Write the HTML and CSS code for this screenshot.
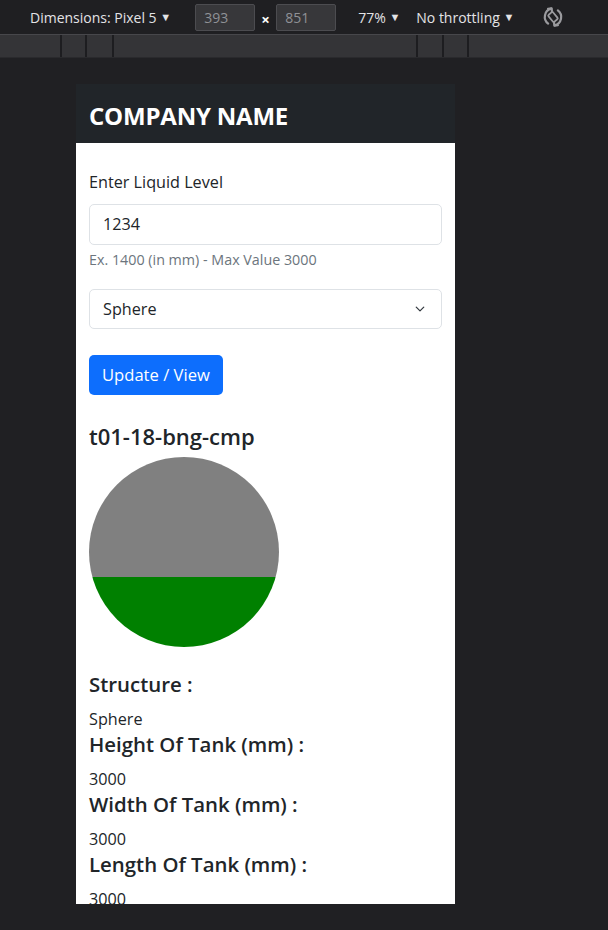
FILE: index.html
```html
<!DOCTYPE html>
<html lang="en">
<head>
<meta charset="utf-8">
<title>Tank Level</title>
<link rel="stylesheet" href="styles.css">
</head>
<body>
<div class="toolbar">
  <span class="tb-item tb-dim">Dimensions: Pixel 5 <span class="caret">▼</span></span>
  <span class="tb-box">393</span>
  <span class="tb-x">×</span>
  <span class="tb-box">851</span>
  <span class="tb-item tb-zoom">77% <span class="caret">▼</span></span>
  <span class="tb-item tb-throttle">No throttling <span class="caret">▼</span></span>
  <span class="tb-rotate">
    <svg width="26" height="26" viewBox="0 0 26 26" fill="none" stroke="#9a9a9e" stroke-width="2.2" stroke-linecap="round">
      <g transform="rotate(-40 13 13)">
        <path d="M5 15 A8.5 8.5 0 0 1 17 5.5"/>
        <path d="M21 11 A8.5 8.5 0 0 1 9 20.5"/>
        <path d="M14.5 3.5 L17.5 5.5 L15.5 8.5" stroke-linejoin="round"/>
        <path d="M11.5 22.5 L8.5 20.5 L10.5 17.5" stroke-linejoin="round"/>
        <rect x="10" y="8.5" width="6" height="9" rx="1.2" stroke-width="1.8"/>
      </g>
    </svg>
  </span>
</div>
<div class="ruler">
  <div class="seg seg1"></div>
  <div class="seg seg2"></div>
  <div class="seg seg3"></div>
  <div class="seg seg4"></div>
  <div class="seg seg5"></div>
  <div class="seg seg6"></div>
  <div class="seg-rest"></div>
</div>
<div class="stage">
  <div class="device">
    <header class="app-header">
      <h1 class="brand">COMPANY NAME</h1>
    </header>
    <main class="content">
      <label class="form-label" for="level">Enter Liquid Level</label>
      <div class="form-control">1234</div>
      <div class="form-text">Ex. 1400 (in mm) - Max Value 3000</div>
      <div class="form-select">
        <span>Sphere</span>
        <svg width="14" height="10" viewBox="0 0 16 16" fill="none" stroke="#343a40" stroke-width="2" stroke-linecap="round" stroke-linejoin="round"><path d="M2 5l6 6 6-6"/></svg>
      </div>
      <div class="btn">Update / View</div>
      <h3 class="tank-name">t01-18-bng-cmp</h3>
      <div class="tank"></div>
      <h5 class="prop-title first">Structure :</h5>
      <p class="prop-value">Sphere</p>
      <h5 class="prop-title">Height Of Tank (mm) :</h5>
      <p class="prop-value">3000</p>
      <h5 class="prop-title">Width Of Tank (mm) :</h5>
      <p class="prop-value">3000</p>
      <h5 class="prop-title">Length Of Tank (mm) :</h5>
      <p class="prop-value">3000</p>
    </main>
  </div>
</div>
</body>
</html>
```
FILE: styles.css
```css
* { box-sizing: border-box; }
html, body { margin: 0; padding: 0; }
body {
  background: #202023;
  width: 608px;
  height: 930px;
  overflow: hidden;
  font-family: "Open Sans", "Noto Sans", sans-serif;
}
.toolbar {
  height: 35px;
  background: #1f1f22;
  border-bottom: 1px solid #47474b;
  display: flex;
  align-items: center;
  color: #e3e3e6;
  font-size: 14px;
  padding-left: 30px;
}
.caret { font-size: 11px; position: relative; top: -2px; }
.tb-dim { margin-right: 24px; }
.tb-box {
  width: 60px;
  height: 27px;
  background: #37373a;
  border: 1px solid #4c4c50;
  border-radius: 2px;
  color: #8f9196;
  padding-left: 8px;
  line-height: 25px;
}
.tb-x { width: 21px; text-align: center; font-weight: bold; color: #fff; font-size: 15px; padding-top: 4px; }
.tb-zoom { margin-left: 22px; margin-right: 16px; }
.tb-rotate { margin-left: 26px; display: flex; }
.ruler {
  height: 23px;
  background: #343437;
  display: flex;
  border-bottom: 1px solid #2a2a2d;
}
.seg { border-right: 2px solid #1d1d20; height: 100%; }
.seg1 { width: 62px; }
.seg2 { width: 25px; }
.seg3 { width: 27px; }
.seg4 { width: 304px; }
.seg5 { width: 26px; }
.seg6 { width: 25px; }
.seg-rest { flex: 1; }
.stage { padding: 26px 0 0 76px; }
.device {
  width: 379px;
  height: 820px;
  overflow: hidden;
  background: #fff;
  font-family: "Open Sans", "Noto Sans", sans-serif;
  color: #212529;
}
.app-header {
  height: 59px;
  background: #212529;
  display: flex;
  align-items: center;
  padding: 0 13px;
}
.brand {
  margin: 0;
  color: #fff;
  font-size: 24px;
  font-weight: 700;
  letter-spacing: -0.2px;
  position: relative;
  top: 2px;
}
.content {
  padding: 28px 13px 0;
  display: flex;
  flex-direction: column;
  align-items: flex-start;
}
.form-label { font-size: 16.2px; line-height: 22px; margin-bottom: 11px; }
.form-control {
  width: 100%;
  height: 41px;
  border: 1px solid #dee2e6;
  border-radius: 5px;
  padding: 0 13px;
  font-size: 16.2px;
  line-height: 39px;
}
.form-text { font-size: 14.3px; color: #6c757d; margin-top: 5px; line-height: 20px; }
.form-select {
  margin-top: 19px;
  width: 100%;
  height: 40px;
  border: 1px solid #dee2e6;
  border-radius: 5px;
  padding: 0 14px 0 13px;
  font-size: 16.2px;
  display: flex;
  align-items: center;
  justify-content: space-between;
}
.btn {
  margin-top: 26px;
  height: 40px;
  background: #0d6efd;
  color: #fff;
  border-radius: 5px;
  padding: 0 13px;
  font-size: 16.6px;
  line-height: 40px;
}
.tank-name {
  margin: 27px 0 7px;
  font-size: 22px;
  font-weight: 600;
  line-height: 28px;
}
.tank {
  width: 190px;
  height: 190px;
  border-radius: 50%;
  background: linear-gradient(to bottom, #808080 0, #808080 120px, #008000 120px, #008000 100%);
}
.prop-title {
  margin: 0;
  font-size: 20.4px;
  font-weight: 600;
  line-height: 26px;
  margin-top: 0;
}
.prop-title.first { margin-top: 24px; }
.prop-value {
  margin: 10px 0 0;
  font-size: 16.2px;
  line-height: 24px;
}
```
